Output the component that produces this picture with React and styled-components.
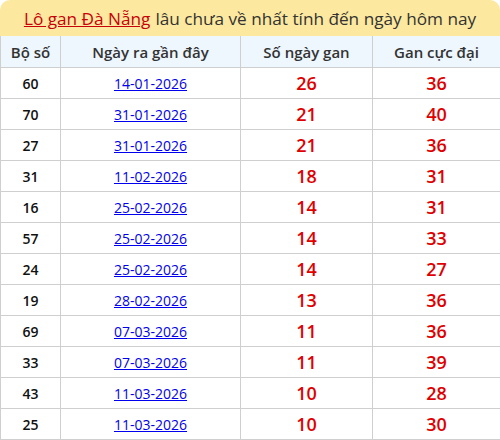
import React from 'react';
import styled, { createGlobalStyle } from 'styled-components';

const rows = [
  ['60', '14-01-2026', 26, 36],
  ['70', '31-01-2026', 21, 40],
  ['27', '31-01-2026', 21, 36],
  ['31', '11-02-2026', 18, 31],
  ['16', '25-02-2026', 14, 31],
  ['57', '25-02-2026', 14, 33],
  ['24', '25-02-2026', 14, 27],
  ['19', '28-02-2026', 13, 36],
  ['69', '07-03-2026', 11, 36],
  ['33', '07-03-2026', 11, 39],
  ['43', '11-03-2026', 10, 28],
  ['25', '11-03-2026', 10, 30],
];

const GlobalStyle = createGlobalStyle`
  body {
    margin: 0;
    background: #fff;
    font-family: 'Open Sans', 'Noto Sans', sans-serif;
  }
`;

const Wrap = styled.div`
  width: 500px;
`;

const Title = styled.div`
  height: 36px;
  display: flex;
  align-items: center;
  justify-content: center;
  background: #fce89e;
  border-radius: 10px 10px 0 0;
  font-size: 17.2px;
  color: #333;
  white-space: nowrap;
`;

const TitleLink = styled.a`
  color: #c8000a;
  text-decoration: underline;
  margin-right: 5px;
`;

const Table = styled.table`
  width: 500px;
  border-collapse: collapse;
  table-layout: fixed;
`;

const Th = styled.th`
  height: 31px;
  padding: 0;
  background: #eef6fe;
  border: 1px solid #cfcfcf;
  border-top: none;
  font-size: 15px;
  font-weight: 600;
  color: #333;
  text-align: center;
`;

const Td = styled.td`
  height: 30px;
  padding: 0;
  border: 1px solid #cfcfcf;
  text-align: center;
  font-size: ${p => (p.$big ? '18px' : '14px')};
  font-weight: ${p => (p.$big || p.$bold ? 600 : 400)};
  color: ${p => (p.$big ? '#e00000' : '#111')};
`;

const DateLink = styled.a`
  color: #0000ee;
  text-decoration: underline;
`;

export default function App() {
  return (
    <Wrap>
      <GlobalStyle />
      <Title>
        <TitleLink href="#">Lô gan Đà Nẵng</TitleLink>
        lâu chưa về nhất tính đến ngày hôm nay
      </Title>
      <Table>
        <colgroup>
          <col style={{ width: 60 }} />
          <col style={{ width: 180 }} />
          <col style={{ width: 132 }} />
          <col style={{ width: 128 }} />
        </colgroup>
        <thead>
          <tr>
            <Th>Bộ số</Th>
            <Th>Ngày ra gần đây</Th>
            <Th>Số ngày gan</Th>
            <Th>Gan cực đại</Th>
          </tr>
        </thead>
        <tbody>
          {rows.map(([num, date, gan, max]) => (
            <tr key={num}>
              <Td $bold>{num}</Td>
              <Td>
                <DateLink href="#">{date}</DateLink>
              </Td>
              <Td $big>{gan}</Td>
              <Td $big>{max}</Td>
            </tr>
          ))}
        </tbody>
      </Table>
    </Wrap>
  );
}
